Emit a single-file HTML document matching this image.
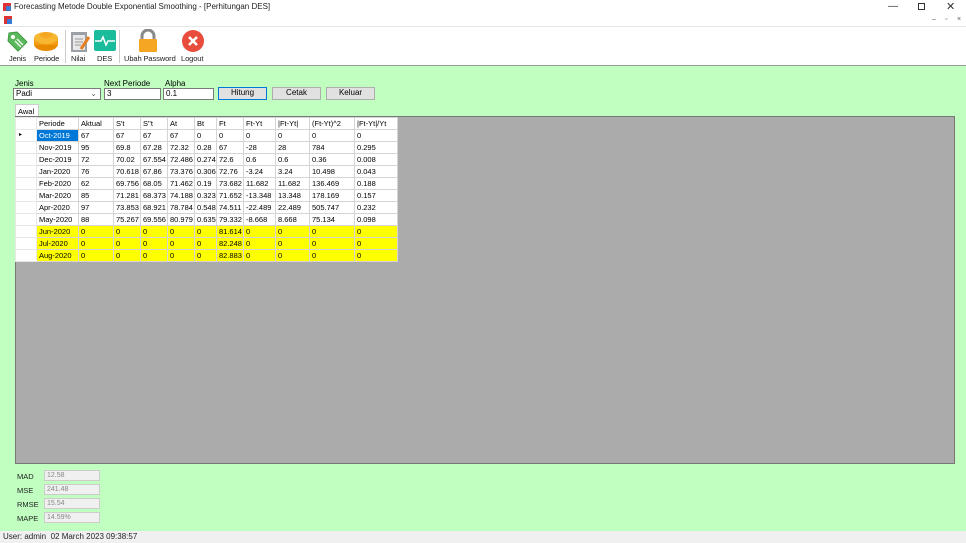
<!DOCTYPE html>
<html><head><style>
*{margin:0;padding:0;box-sizing:border-box}
body{width:966px;height:543px;overflow:hidden;background:#fff;font-family:"Liberation Sans",sans-serif;font-size:8px;color:#000;position:relative}
.a{position:absolute}
.lbl{font-size:8px}
.tb{font-size:7.5px;color:#222;letter-spacing:-0.1px}
.inp{position:absolute;background:#fff;border:1px solid #7a7a7a;height:11px;font-size:8px;padding-left:2px;line-height:9px}
.btn{position:absolute;background:#e1e1e1;border:1px solid #adadad;height:12px;font-size:8px;text-align:center;line-height:10px}
table{border-collapse:collapse;font-size:7.5px;position:absolute;left:15px;top:117px;background:#fff}
td{border:1px solid #d5d5d5;height:12px;padding:0 0 0 2px;line-height:11px;white-space:nowrap;overflow:hidden}
tr.h td{background:#fff}
tr.y td{background:#ffff00}
tr td.rh{background:#fff;padding:0;border-color:#e8e8e8}
.sbox{position:absolute;left:44px;width:56px;height:11px;background:#f0f0f0;border:1px solid #ccc;color:#888;font-size:7px;padding-left:2px;line-height:9px}
.sl{position:absolute;left:17px;font-size:7.5px;color:#222}
</style></head><body>
<div class="a" style="left:3px;top:3px;width:8px;height:8px;background:#d33"><div class="a" style="left:3px;top:3px;width:5px;height:5px;background:#3a7bd5"></div></div>
<div class="a" style="left:14px;top:2px;font-size:8px;color:#222">Forecasting Metode Double Exponential Smoothing - [Perhitungan DES]</div>
<div class="a" style="left:888px;top:1px;font-size:10px;color:#333">—</div>
<div class="a" style="left:918px;top:3px;width:7px;height:7px;border:1px solid #333"></div>
<div class="a" style="left:946px;top:0px;font-size:11px;color:#333">✕</div>
<div class="a" style="left:4px;top:16px;width:8px;height:8px;background:#d33"><div class="a" style="left:3px;top:3px;width:5px;height:5px;background:#3a7bd5"></div></div>
<div class="a" style="left:932px;top:16px;font-size:7px;color:#555">–</div>
<div class="a" style="left:945px;top:16px;font-size:7px;color:#777">▫</div>
<div class="a" style="left:957px;top:16px;font-size:7px;color:#555">×</div>
<div class="a" style="left:0;top:26px;width:966px;height:1px;background:#e5e5e5"></div>
<div class="a" style="left:0;top:27px;width:966px;height:38px;background:#fff"></div>
<svg class="a" style="left:5px;top:29px" width="24" height="24"><path d="M4 4 L12 3 L22 13 L13 22 L3 12 Z" fill="#5cb85c" stroke="#3e9a3e"/><circle cx="8" cy="8" r="2" fill="#fff"/><path d="M10 12 l6 6 M12 10 l6 6" stroke="#e8f5e8" stroke-width="1.5"/></svg>
<svg class="a" style="left:33px;top:29px" width="26" height="24"><ellipse cx="13" cy="15" rx="12" ry="7" fill="#e88a00"/><rect x="1" y="9" width="24" height="7" fill="#f39c12"/><ellipse cx="13" cy="9" rx="12" ry="6" fill="#f7b731"/><ellipse cx="13" cy="6" rx="6" ry="3" fill="#f5a623"/></svg>
<div class="a" style="left:65px;top:30px;width:1px;height:33px;background:#ccc"></div>
<svg class="a" style="left:69px;top:29px" width="22" height="24"><rect x="2" y="3" width="16" height="20" fill="#9aa0a6"/><rect x="4" y="6" width="12" height="15" fill="#e8e8e8"/><path d="M6 10h8M6 13h8M6 16h6" stroke="#999"/><path d="M12 20 L20 8" stroke="#e67e22" stroke-width="3"/></svg>
<svg class="a" style="left:93px;top:29px" width="24" height="24"><rect x="1" y="1" width="22" height="21" rx="2" fill="#1abc9c"/><path d="M2 12 h6 l2 -4 l3 8 l2 -4 h7" stroke="#fff" stroke-width="1.5" fill="none"/></svg>
<div class="a" style="left:119px;top:30px;width:1px;height:33px;background:#ccc"></div>
<svg class="a" style="left:137px;top:29px" width="22" height="24"><path d="M5 11 V7 a6 6 0 0 1 12 0 V11" stroke="#888" stroke-width="3" fill="none"/><rect x="2" y="10" width="18" height="13" rx="1" fill="#f5a623"/></svg>
<svg class="a" style="left:181px;top:29px" width="24" height="24"><circle cx="12" cy="12" r="11" fill="#e74c3c"/><path d="M8 8 L16 16 M16 8 L8 16" stroke="#fff" stroke-width="2.5"/></svg>
<div class="a tb" style="left:9px;top:54px">Jenis</div>
<div class="a tb" style="left:34px;top:54px">Periode</div>
<div class="a tb" style="left:71px;top:54px">Nilai</div>
<div class="a tb" style="left:97px;top:54px">DES</div>
<div class="a tb" style="left:124px;top:54px">Ubah Password</div>
<div class="a tb" style="left:181px;top:54px">Logout</div>
<div class="a" style="left:0;top:65px;width:966px;height:466px;background:#c0ffc0;border-top:1px solid #999"></div>
<div class="a lbl" style="left:15px;top:79px">Jenis</div>
<div class="a lbl" style="left:104px;top:79px">Next Periode</div>
<div class="a lbl" style="left:165px;top:79px">Alpha</div>
<div class="inp" style="left:13px;top:88px;width:88px;height:12px">Padi<span style="position:absolute;right:3px;top:0;color:#666">⌄</span></div>
<div class="inp" style="left:104px;top:88px;width:57px;height:12px">3</div>
<div class="inp" style="left:163px;top:88px;width:51px;height:12px">0.1</div>
<div class="btn" style="left:218px;top:87px;width:49px;height:13px;border-color:#0078d7">Hitung</div>
<div class="btn" style="left:272px;top:87px;width:49px;height:13px">Cetak</div>
<div class="btn" style="left:326px;top:87px;width:49px;height:13px">Keluar</div>
<div class="a" style="left:15px;top:104px;width:24px;height:13px;background:#fff;border:1px solid #ccc;border-bottom:none;font-size:7.5px;padding:2px 0 0 2px">Awal</div>
<div class="a" style="left:15px;top:116px;width:940px;height:348px;background:#ababab;border:1px solid #777"></div>
<table>
<colgroup><col style="width:21px"><col style="width:42px"><col style="width:35px"><col style="width:27px"><col style="width:27px"><col style="width:27px"><col style="width:22px"><col style="width:27px"><col style="width:32px"><col style="width:34px"><col style="width:45px"><col style="width:43px"></colgroup>
<tr class="h"><td class="rh"></td><td>Periode</td><td>Aktual</td><td>S't</td><td>S''t</td><td>At</td><td>Bt</td><td>Ft</td><td>Ft-Yt</td><td>|Ft-Yt|</td><td>(Ft-Yt)^2</td><td>|Ft-Yt|/Yt</td></tr>
<tr><td class="rh" style="font-size:6px;padding-left:3px">▸</td><td style="background:#0078d7;color:#fff">Oct-2019</td><td>67</td><td>67</td><td>67</td><td>67</td><td>0</td><td>0</td><td>0</td><td>0</td><td>0</td><td>0</td></tr>
<tr><td class="rh"></td><td>Nov-2019</td><td>95</td><td>69.8</td><td>67.28</td><td>72.32</td><td>0.28</td><td>67</td><td>-28</td><td>28</td><td>784</td><td>0.295</td></tr>
<tr><td class="rh"></td><td>Dec-2019</td><td>72</td><td>70.02</td><td>67.554</td><td>72.486</td><td>0.274</td><td>72.6</td><td>0.6</td><td>0.6</td><td>0.36</td><td>0.008</td></tr>
<tr><td class="rh"></td><td>Jan-2020</td><td>76</td><td>70.618</td><td>67.86</td><td>73.376</td><td>0.306</td><td>72.76</td><td>-3.24</td><td>3.24</td><td>10.498</td><td>0.043</td></tr>
<tr><td class="rh"></td><td>Feb-2020</td><td>62</td><td>69.756</td><td>68.05</td><td>71.462</td><td>0.19</td><td>73.682</td><td>11.682</td><td>11.682</td><td>136.469</td><td>0.188</td></tr>
<tr><td class="rh"></td><td>Mar-2020</td><td>85</td><td>71.281</td><td>68.373</td><td>74.188</td><td>0.323</td><td>71.652</td><td>-13.348</td><td>13.348</td><td>178.169</td><td>0.157</td></tr>
<tr><td class="rh"></td><td>Apr-2020</td><td>97</td><td>73.853</td><td>68.921</td><td>78.784</td><td>0.548</td><td>74.511</td><td>-22.489</td><td>22.489</td><td>505.747</td><td>0.232</td></tr>
<tr><td class="rh"></td><td>May-2020</td><td>88</td><td>75.267</td><td>69.556</td><td>80.979</td><td>0.635</td><td>79.332</td><td>-8.668</td><td>8.668</td><td>75.134</td><td>0.098</td></tr>
<tr class="y"><td class="rh"></td><td>Jun-2020</td><td>0</td><td>0</td><td>0</td><td>0</td><td>0</td><td>81.614</td><td>0</td><td>0</td><td>0</td><td>0</td></tr>
<tr class="y"><td class="rh"></td><td>Jul-2020</td><td>0</td><td>0</td><td>0</td><td>0</td><td>0</td><td>82.248</td><td>0</td><td>0</td><td>0</td><td>0</td></tr>
<tr class="y"><td class="rh"></td><td>Aug-2020</td><td>0</td><td>0</td><td>0</td><td>0</td><td>0</td><td>82.883</td><td>0</td><td>0</td><td>0</td><td>0</td></tr>
</table>
<div class="sl" style="top:472px">MAD</div><div class="sbox" style="top:470px">12.58</div>
<div class="sl" style="top:486px">MSE</div><div class="sbox" style="top:484px">241.48</div>
<div class="sl" style="top:500px">RMSE</div><div class="sbox" style="top:498px">15.54</div>
<div class="sl" style="top:514px">MAPE</div><div class="sbox" style="top:512px">14.59%</div>
<div class="a" style="left:0;top:531px;width:966px;height:12px;background:#f0f0f0;font-size:8px;padding:1px 0 0 3px;color:#222">User: admin&nbsp; 02 March 2023 09:38:57</div>
</body></html>
